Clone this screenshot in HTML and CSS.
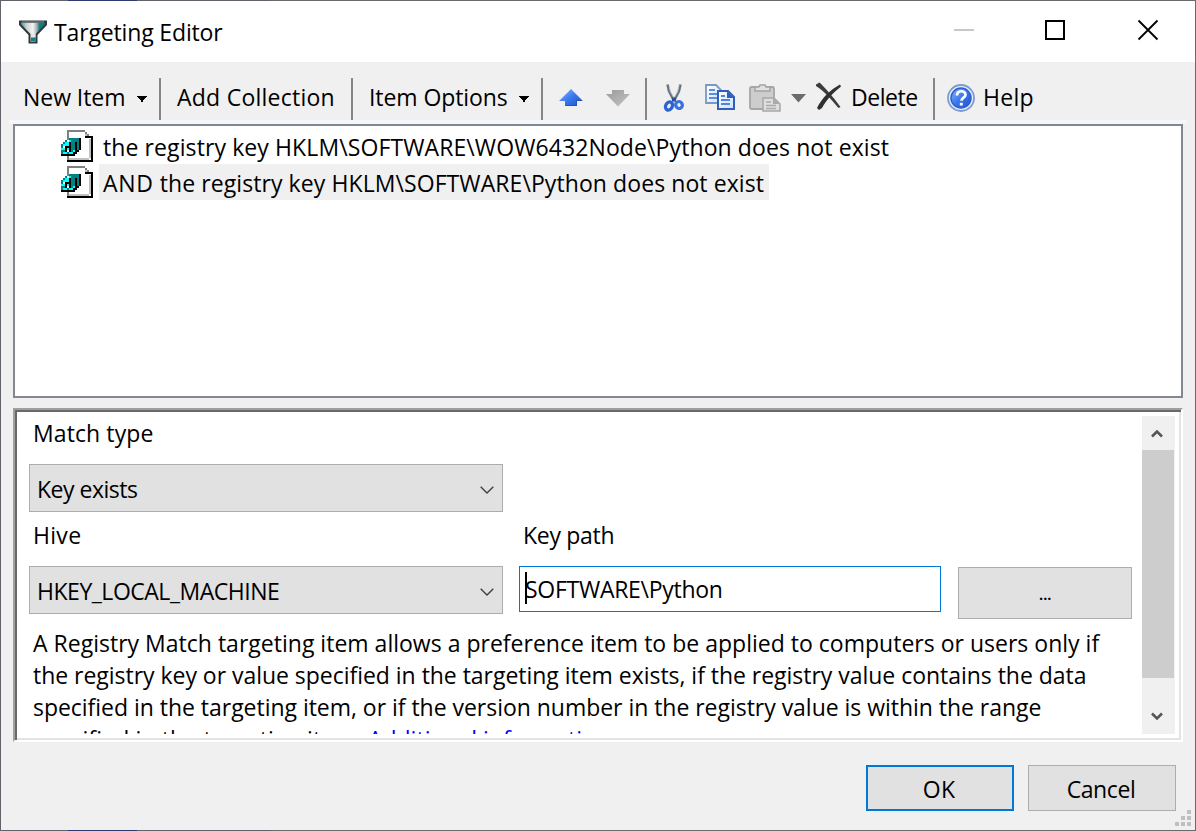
FILE: index.html
```
<!DOCTYPE html>
<html lang="en">
<head>
<meta charset="utf-8">
<title>Targeting Editor</title>
<link rel="stylesheet" href="styles.css">
</head>
<body>
<svg class="defs" aria-hidden="true">
  <defs>
    <linearGradient id="blue" x1="0" y1="0" x2="1" y2="1"><stop offset="0" stop-color="#8db8ff"/><stop offset=".5" stop-color="#3a78ee"/><stop offset="1" stop-color="#1c50c8"/></linearGradient>
    <linearGradient id="grey" x1="0" y1="0" x2="1" y2="1"><stop offset="0" stop-color="#9a9a9a"/><stop offset="1" stop-color="#c4c4c4"/></linearGradient>
    <linearGradient id="sheet" x1="0" y1="0" x2="1" y2="1"><stop offset="0" stop-color="#ffffff"/><stop offset="1" stop-color="#cfe0fa"/></linearGradient>
    <linearGradient id="cone" x1="0" y1="0" x2="1" y2="0"><stop offset="0" stop-color="#2f8f90"/><stop offset=".25" stop-color="#c9d2d3"/><stop offset=".5" stop-color="#f4f4f4"/><stop offset=".66" stop-color="#9fa8aa"/><stop offset=".74" stop-color="#0f8484"/><stop offset="1" stop-color="#0a6d70"/></linearGradient>
    <symbol id="registry" viewBox="0 0 32 32">
      <g shape-rendering="crispEdges">
        <path fill="#fff" d="M6 0h18l6 6v24H6z"/>
        <path fill="#808080" d="M6 0h18v2H8v28H6z"/>
        <path fill="#c0c0c0" d="M24 2h2v2h2v2h2v2h-6zM8 28h20v2H8zM28 9h2v19h-2z"/>
        <path fill="#808080" d="M24 2h2v2h-2zM26 4h2v2h-2z"/>
        <path fill="#000" d="M24 6h8v26H6v-2h24V8h-6z"/>
        <path fill="#008080" d="M0 14h2v-2h2v-2h4V8h12v12h-2v2h-2v2h-2v2H0z"/>
        <path fill="#0ff" d="M4 12h4v2H4zM8 10h2v2H8zM2 14h4v2H2zM0 18h4v2H0zM2 22h4v2H2zM6 18h2v2H6zM8 22h4v2H8zM12 20h2v2h-2zM6 14h2v2H6z"/>
        <path fill="#fff" d="M6 10h2v2H6zM2 16h2v2H2zM6 20h2v2H6z"/>
        <path fill="#000" d="M18 8h2v12h-2v2h-2v2h-2v2H0v-2h12v-2h2v-6h-4v6H8v-4H6v-2h2v-4h2v4h4v-4h2v8h2z"/>
        <path fill="#000" d="M4 16h2v6H4z"/>
      </g>
    </symbol>
    <symbol id="chevron" viewBox="0 0 14 8"><path d="M.7.8 7 7 13.3.8" fill="none" stroke="#404040" stroke-width="1.4"/></symbol>
    <symbol id="caret" viewBox="0 0 10 6"><path d="M0 0h10v1H9v1H8v1H7v1H6v2H4V4H3V3H2V2H1V1H0z" fill="#000" shape-rendering="crispEdges"/></symbol>
  </defs>
</svg>
<div class="window">
  <header class="titlebar">
    <svg class="funnel" viewBox="0 0 28 24">
      <path d="M1 1.500h26v3L17.500 14.500v8h-7v-8L1 4.500z" fill="url(#cone)" stroke="#303a3c" stroke-width="2"/>
      <path d="M3 2h22" stroke="#6d7475" stroke-width="1.500"/>
      <path d="M12 13.500h4.500v4H12z" fill="#e2e6e6"/><path d="M12 17.500h4.500v3.500H12z" fill="#117f80"/>
    </svg>
    <h1 class="title">Targeting Editor</h1>
    <svg class="controls" viewBox="0 0 196 20">
      <path d="M0 10h20" stroke="#c8c8c8" stroke-width="2"/>
      <path d="M92 1h18v18H92z" fill="none" stroke="#000" stroke-width="2"/>
      <path d="M184.500.5l19 19M203.500.5l-19 19" fill="none" stroke="#000" stroke-width="1.800"/>
    </svg>
  </header>
  <nav class="toolbar">
    <div class="tool new"><span>New Item</span><svg class="caret"><use href="#caret"/></svg></div>
    <div class="tool add"><span>Add Collection</span></div>
    <div class="tool options"><span>Item Options</span><svg class="caret"><use href="#caret"/></svg></div>
    <div class="tool order">
      <svg class="arrow" viewBox="0 0 24 18"><path d="M12 0 24 12h-6v5H6v-5H0z" fill="url(#blue)"/><path d="M6.500 16.500h11v-5h4.500" fill="none" stroke="#2453bd"/></svg>
      <svg class="arrow" viewBox="0 0 24 18"><path d="M6 1h12v4h6L12 17.500 0 5h6z" fill="url(#grey)"/></svg>
    </div>
    <div class="tool edit">
      <svg class="cut" viewBox="0 0 20 28">
        <path d="M3.500.5 5 7l5 10M16.500.5 15 7l-5 10" fill="none" stroke="#66727f" stroke-width="2.500"/>
        <path d="M5 1.500 6.500 8l3.500 6M15 1.500 13.500 8 10 14" fill="none" stroke="#b9c3cd"/>
        <path d="M10 13.500v4" stroke="#2e4f92" stroke-width="4"/>
        <ellipse cx="5" cy="22" rx="3.300" ry="4.300" transform="rotate(28 5 22)" fill="none" stroke="#2c62d2" stroke-width="3.300"/>
        <ellipse cx="15" cy="21" rx="3.300" ry="3.500" transform="rotate(-28 15 21)" fill="none" stroke="#3b72dd" stroke-width="3.300"/>
      </svg>
      <svg class="copy" viewBox="0 0 30 26">
        <path d="M1 1h10l5 5v13H1z" fill="url(#sheet)" stroke="#7898c6" stroke-width="1.800"/>
        <path d="M4 6h6M4 10h9M4 14h9" stroke="#5c8fe0" stroke-width="1.800"/>
        <path d="M13 7h10l6 6v12H13z" fill="url(#sheet)" stroke="#2f5fb9" stroke-width="2"/>
        <path d="M22 7v7h7z" fill="#2d61c5"/>
        <path d="M16 12h4M16 16h9M16 20h9" stroke="#4d86e4" stroke-width="1.800"/>
      </svg>
      <svg class="paste" viewBox="0 0 32 28">
        <rect x="1" y="3" width="24" height="22" rx="1.500" fill="#cdcdcd" stroke="#a6a6a6" stroke-width="1.800"/>
        <path d="M6 7V3h4l1-2h5l1 2h4v4z" fill="#e1e1e1" stroke="#a3a3a3" stroke-width="1.500"/>
        <path d="M14 14h11l6 6v7H14z" fill="#dedede" stroke="#a6a6a6" stroke-width="1.500"/>
        <path d="M24 14v6h7z" fill="#aaa"/>
        <path d="M17 18h5M17 21.500h10M17 24.500h10" stroke="#aaa" stroke-width="1.300"/>
      </svg>
      <svg class="drop" viewBox="0 0 15 9"><path d="M0 0h15L7.500 8.500z" fill="#6b6b6b"/></svg>
      <svg class="cross" viewBox="0 0 26 28">
        <path d="M0 2.500 3.500.5C8 5 16 13 24.500 25l-2 1C15 17 8 9 0 4z" fill="#3c3c3c"/>
        <path d="M24 2.500l1 2C17 11 11 17 6 26l-3 2-2-2C6 16 14 8 24 2.500z" fill="#303030"/>
      </svg>
      <span>Delete</span>
    </div>
    <div class="tool help">
      <svg class="orb" viewBox="0 0 28 28">
        <circle cx="14" cy="14" r="13" fill="#e9effb" stroke="#7d9bd3" stroke-width="1.800"/>
        <circle cx="14" cy="14" r="10" fill="url(#blue)" stroke="#2f5fca" stroke-width="1.500"/>
        <path d="M10 11.500c0-5.500 8.500-5.500 8.500-.8 0 3-4 3-4 6" fill="none" stroke="#fff" stroke-width="2.700"/><path d="M12.800 18.800h3v2.700h-3z" fill="#fff"/>
      </svg>
      <span>Help</span>
    </div>
  </nav>
  <ul class="rules">
    <li class="rule"><svg class="reg"><use href="#registry"/></svg><span class="rule-text">the registry key HKLM\SOFTWARE\WOW6432Node\Python does not exist</span></li>
    <li class="rule"><svg class="reg"><use href="#registry"/></svg><span class="rule-text selected"><span class="and">AND</span> the registry key HKLM\SOFTWARE\Python does not exist</span></li>
  </ul>
  <section class="panel">
    <div class="form">
      <label class="label match">Match type</label>
      <div class="combo"><span class="t-exists">Key exists</span><svg class="chev"><use href="#chevron"/></svg></div>
      <div class="labels"><label class="label hive">Hive</label><label class="label keypath">Key path</label></div>
      <div class="fields">
        <div class="combo"><span class="t-hive">HKEY_LOCAL_MACHINE</span><svg class="chev"><use href="#chevron"/></svg></div>
        <div class="input"><i class="cursor"></i><span>SOFTWARE\Python</span></div>
        <button class="btn browse"><span>...</span></button>
      </div>
      <p class="about">A Registry Match targeting item allows a preference item to be applied to computers or users only if<br><span class="tight">the registry key or value specified in the targeting item exists, if the registry value contains the data<br>specified in the targeting item, or if the version number in the registry value is within the range</span><br><span class="tail">specified in the targeting item. </span><a class="link">Additional information</a></p>
    </div>
    <div class="scrollbar">
      <svg class="up" viewBox="0 0 12 9"><path d="M1 7.500 6 2.500l5 5" fill="none" stroke="#555" stroke-width="2.600"/></svg>
      <div class="thumb"></div>
      <svg class="down" viewBox="0 0 12 9"><path d="M1 1.500l5 5 5-5" fill="none" stroke="#555" stroke-width="2.600"/></svg>
    </div>
  </section>
  <footer class="footer">
    <button class="btn ok">OK</button>
    <button class="btn cancel">Cancel</button>
    <svg class="grip" viewBox="0 0 16 16"><path d="M12 0h4v4h-4zM6 6h4v4H6zM12 6h4v4h-4zM0 12h4v4H0zM6 12h4v4H6zM12 12h4v4h-4z" fill="#bfbfbf"/></svg>
  </footer>
</div>
</body>
</html>
```
FILE: styles.css
```
* { box-sizing: border-box; }
body {
  margin: 0;
  width: 1196px;
  height: 831px;
  overflow: hidden;
  padding: 1px;
  background: linear-gradient(90deg, #62626b 0 68px, #2f3a70 68px 137px, #62626b 137px 270px, #6a6a6a 270px);
  font: 23px "Open Sans", "Noto Sans", sans-serif;
  color: #000;
}
.defs { position: absolute; width: 0; height: 0; }
svg { display: block; flex: none; overflow: visible; }
.window { width: 1194px; height: 829px; background: #f0f0f0; display: flex; flex-direction: column; }

.titlebar { height: 61px; flex: none; background: #fff; display: flex; align-items: flex-start; padding-left: 18px; }
.funnel { width: 28px; height: 24px; margin-top: 19px; }
.title { margin: 0 0 0 7px; font-size: 23px; font-weight: 400; line-height: 62px; letter-spacing: -.15px; width: 900px; }
.controls { width: 196px; height: 20px; margin: 19px 0 0 0; }

.toolbar { height: 62px; flex: none; display: flex; align-items: flex-start; padding: 16px 0 0 22px; border-bottom: 4px solid #f3f7fc; border-image: linear-gradient(90deg, #f0f0f0 12px, #f3f7fc 12px 1182px, #f0f0f0 1182px) 4; white-space: nowrap; }
.tool { height: 42px; line-height: 38px; display: flex; flex: none; align-items: flex-start; border-right: 2px solid #868686; }
.caret { width: 10px; height: 6px; margin-top: 18px; }
.new { width: 138px; }
.new span { width: 114px; letter-spacing: -.05px; }
.add { width: 192px; padding-left: 16px; letter-spacing: .25px; }
.options { width: 190px; padding-left: 16px; }
.options span { width: 150px; letter-spacing: -.08px; }
.order { width: 104px; padding: 11px 0 0 16px; gap: 23px; }
.arrow { width: 24px; height: 18px; }
.edit { width: 288px; padding-left: 17px; }
.cut { width: 20px; height: 28px; margin-top: 6px; }
.copy { width: 30px; height: 26px; margin: 6px 0 0 21px; }
.paste { width: 32px; height: 28px; margin: 6px 0 0 14px; }
.drop { width: 15px; height: 9px; margin: 16px 0 0 10px; }
.cross { width: 26px; height: 28px; margin: 4px 0 0 10px; }
.edit span { margin-left: 9px; letter-spacing: -.45px; }
.help { border: 0; padding-left: 12px; }
.orb { width: 28px; height: 28px; margin-top: 6px; }
.help span { margin-left: 8px; letter-spacing: .3px; }

.rules { list-style: none; margin: 0 0 0 12px; padding: 2px 0 0 46px; width: 1170px; height: 274px; flex: none; border: 2px solid #828790; background: #fff; }
.rule { height: 36px; display: flex; white-space: nowrap; }
.reg { width: 32px; height: 32px; margin-top: 2px; }
.rule-text { height: 36px; line-height: 38px; margin-left: 6px; padding: 0 4px; letter-spacing: .1px; }
.selected { background: #f0f0f0; width: 670px; letter-spacing: .08px; }
.and { letter-spacing: .7px; }

.panel { margin: 10px 0 0 12px; width: 1170px; height: 334px; flex: none; background: #fff; display: flex; padding: 4px 4px 4px 2px; border: 2px solid; border-color: #a0a0a0 #fff #fff #a0a0a0; box-shadow: inset 2px 2px #696969, inset -2px -2px #e3e3e3; }
.form { width: 1125px; height: 320px; overflow: hidden; padding-left: 12px; }
.label { padding-left: 4px; line-height: 32px; }
.match { display: block; height: 50px; line-height: 38px; letter-spacing: .1px; }
.combo { width: 474px; height: 48px; flex: none; display: flex; align-items: flex-start; justify-content: space-between; padding: 0 8px 0 7px; line-height: 48px; background: #e1e1e1; border: 1px solid #adadad; }
.chev { width: 14px; height: 8px; margin-top: 21px; }
.t-exists { letter-spacing: -.5px; }
.t-hive { letter-spacing: -.48px; }
.labels { display: flex; height: 54px; padding-top: 7px; }
.hive { width: 490px; letter-spacing: .3px; }
.keypath { letter-spacing: -.3px; }
.fields { display: flex; align-items: flex-start; height: 61px; }
.input { width: 422px; height: 46px; margin: 0 17px 0 16px; display: flex; border: 1px solid #0078d7; padding-left: 5px; line-height: 44px; letter-spacing: -.28px; }
.cursor { width: 2px; height: 32px; margin: 5px -2px 0 0; background: #000; }
.btn { margin: 0; padding: 0; border: 1px solid #adadad; background: #e1e1e1; color: #000; font: inherit; }
.browse { width: 174px; height: 52px; margin-top: 1px; font-size: 17px; font-weight: 600; letter-spacing: -.5px; }
.about { margin: 0; padding-left: 4px; line-height: 32px; white-space: nowrap; letter-spacing: .01px; }
.tight { letter-spacing: -.03px; }
.tail { letter-spacing: .12px; }
.link { color: #00f; text-decoration: none; }
.scrollbar { width: 33px; height: 318px; margin-top: 2px; background: #f0f0f0; display: flex; flex-direction: column; }
.up, .down { width: 12px; height: 9px; margin-left: 9px; }
.up { margin-top: 13px; }
.thumb { width: 32px; height: 228px; margin: 12px 0 34px; background: #cdcdcd; }

.footer { display: flex; align-items: flex-start; padding: 23px 0 0 865px; height: 87px; flex: none; }
.ok, .cancel { width: 148px; height: 46px; padding: 2px 2px 0 0; }
.ok { border: 2px solid #0078d7; margin-right: 14px; letter-spacing: .2px; }
.cancel { letter-spacing: -.4px; }
.grip { width: 16px; height: 16px; margin: 45px 0 0 -1px; }
```
